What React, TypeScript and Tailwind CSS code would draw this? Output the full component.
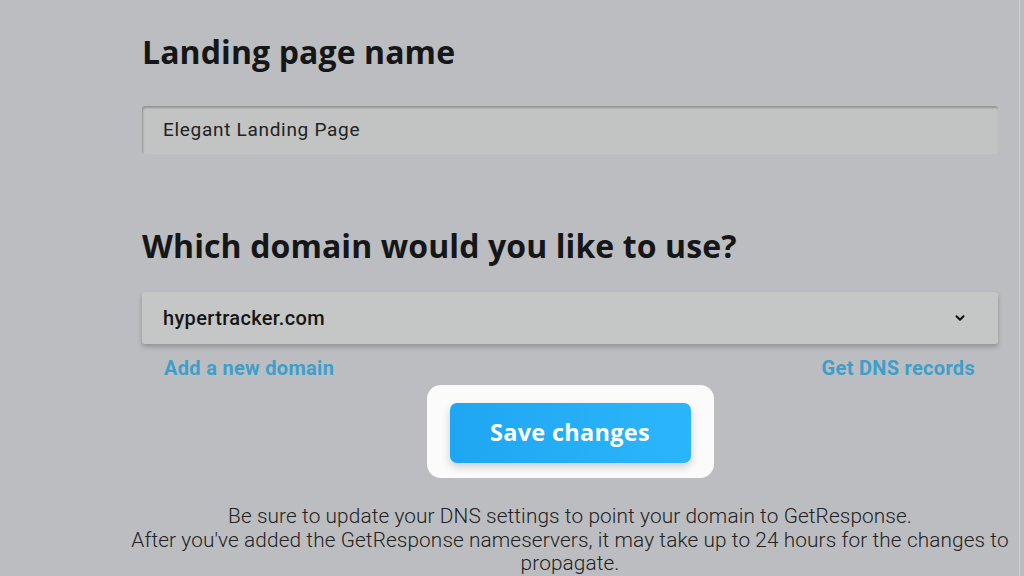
import React from 'react';

const ChevronDown: React.FC = () => (
  <svg width="14" height="14" viewBox="0 0 24 24" fill="none" stroke="#111" strokeWidth="3.5" strokeLinecap="round" strokeLinejoin="round">
    <path d="M6 9l6 6 6-6" />
  </svg>
);

export default function App() {
  return (
    <div className="w-[1024px] h-[576px] overflow-hidden bg-[#bcbdc0] relative" style={{ fontFamily: '"Open Sans", sans-serif' }}>
      <div className="absolute right-[4px] top-0 h-full w-px bg-[#cfd0d2]" />
      <div className="ml-[142px] w-[856px] pt-[28px]">
        <h2 className="text-[32px] font-bold leading-[48px] text-[#151618] tracking-[0.1px]">Landing page name</h2>

        <div className="mt-[30px] h-[48px] rounded-[3px] bg-[#c2c3c3] flex items-center pl-[21px] shadow-[inset_1px_2px_2px_rgba(0,0,0,0.24)]">
          <span className="text-[19px] text-[#222] tracking-[0.7px]" style={{ fontFamily: 'Roboto, sans-serif' }}>
            Elegant Landing Page
          </span>
        </div>

        <h2 className="mt-[68px] text-[32px] font-bold leading-[48px] text-[#151618] tracking-[0.1px]">
          Which domain would you like to use?
        </h2>

        <div className="mt-[22px] h-[52px] rounded-[3px] bg-[#c5c6c6] flex items-center justify-between pl-[21px] pr-[31px] shadow-[0_3px_5px_rgba(0,0,0,0.22)]">
          <span className="text-[20px] font-medium text-[#151515] tracking-[0.35px]" style={{ fontFamily: 'Roboto, sans-serif' }}>
            hypertracker.com
          </span>
          <ChevronDown />
        </div>

        <div className="mt-[12px] flex justify-between pl-[22px] pr-[23px] text-[20px] font-bold text-[#3d9fca] leading-[24px]" style={{ fontFamily: 'Roboto, sans-serif' }}>
          <span className="tracking-[0.3px]">Add a new domain</span>
          <span className="tracking-[0.3px]">Get DNS records</span>
        </div>

        <div className="mt-[5px] flex justify-center">
          <div className="w-[287px] h-[93px] rounded-[14px] bg-[#fbfbfb] flex justify-center pt-[18px]">
            <button className="w-[241px] h-[60px] rounded-[7px] bg-gradient-to-r from-[#1fa6f2] to-[#2bb6fa] text-white text-[23.5px] font-bold tracking-[0.3px] shadow-[0_4px_8px_rgba(0,0,0,0.18)]">
              Save changes
            </button>
          </div>
        </div>
      </div>

      <div
        className="mt-[27px] w-[910px] ml-[115px] text-center text-[20.8px] font-light leading-[23.5px] text-[#222] tracking-[0.1px]"
        style={{ fontFamily: 'Roboto, sans-serif' }}
      >
        <p>Be sure to update your DNS settings to point your domain to GetResponse.</p>
        <p>After you've added the GetResponse nameservers, it may take up to 24 hours for the changes to propagate.</p>
      </div>
    </div>
  );
}
